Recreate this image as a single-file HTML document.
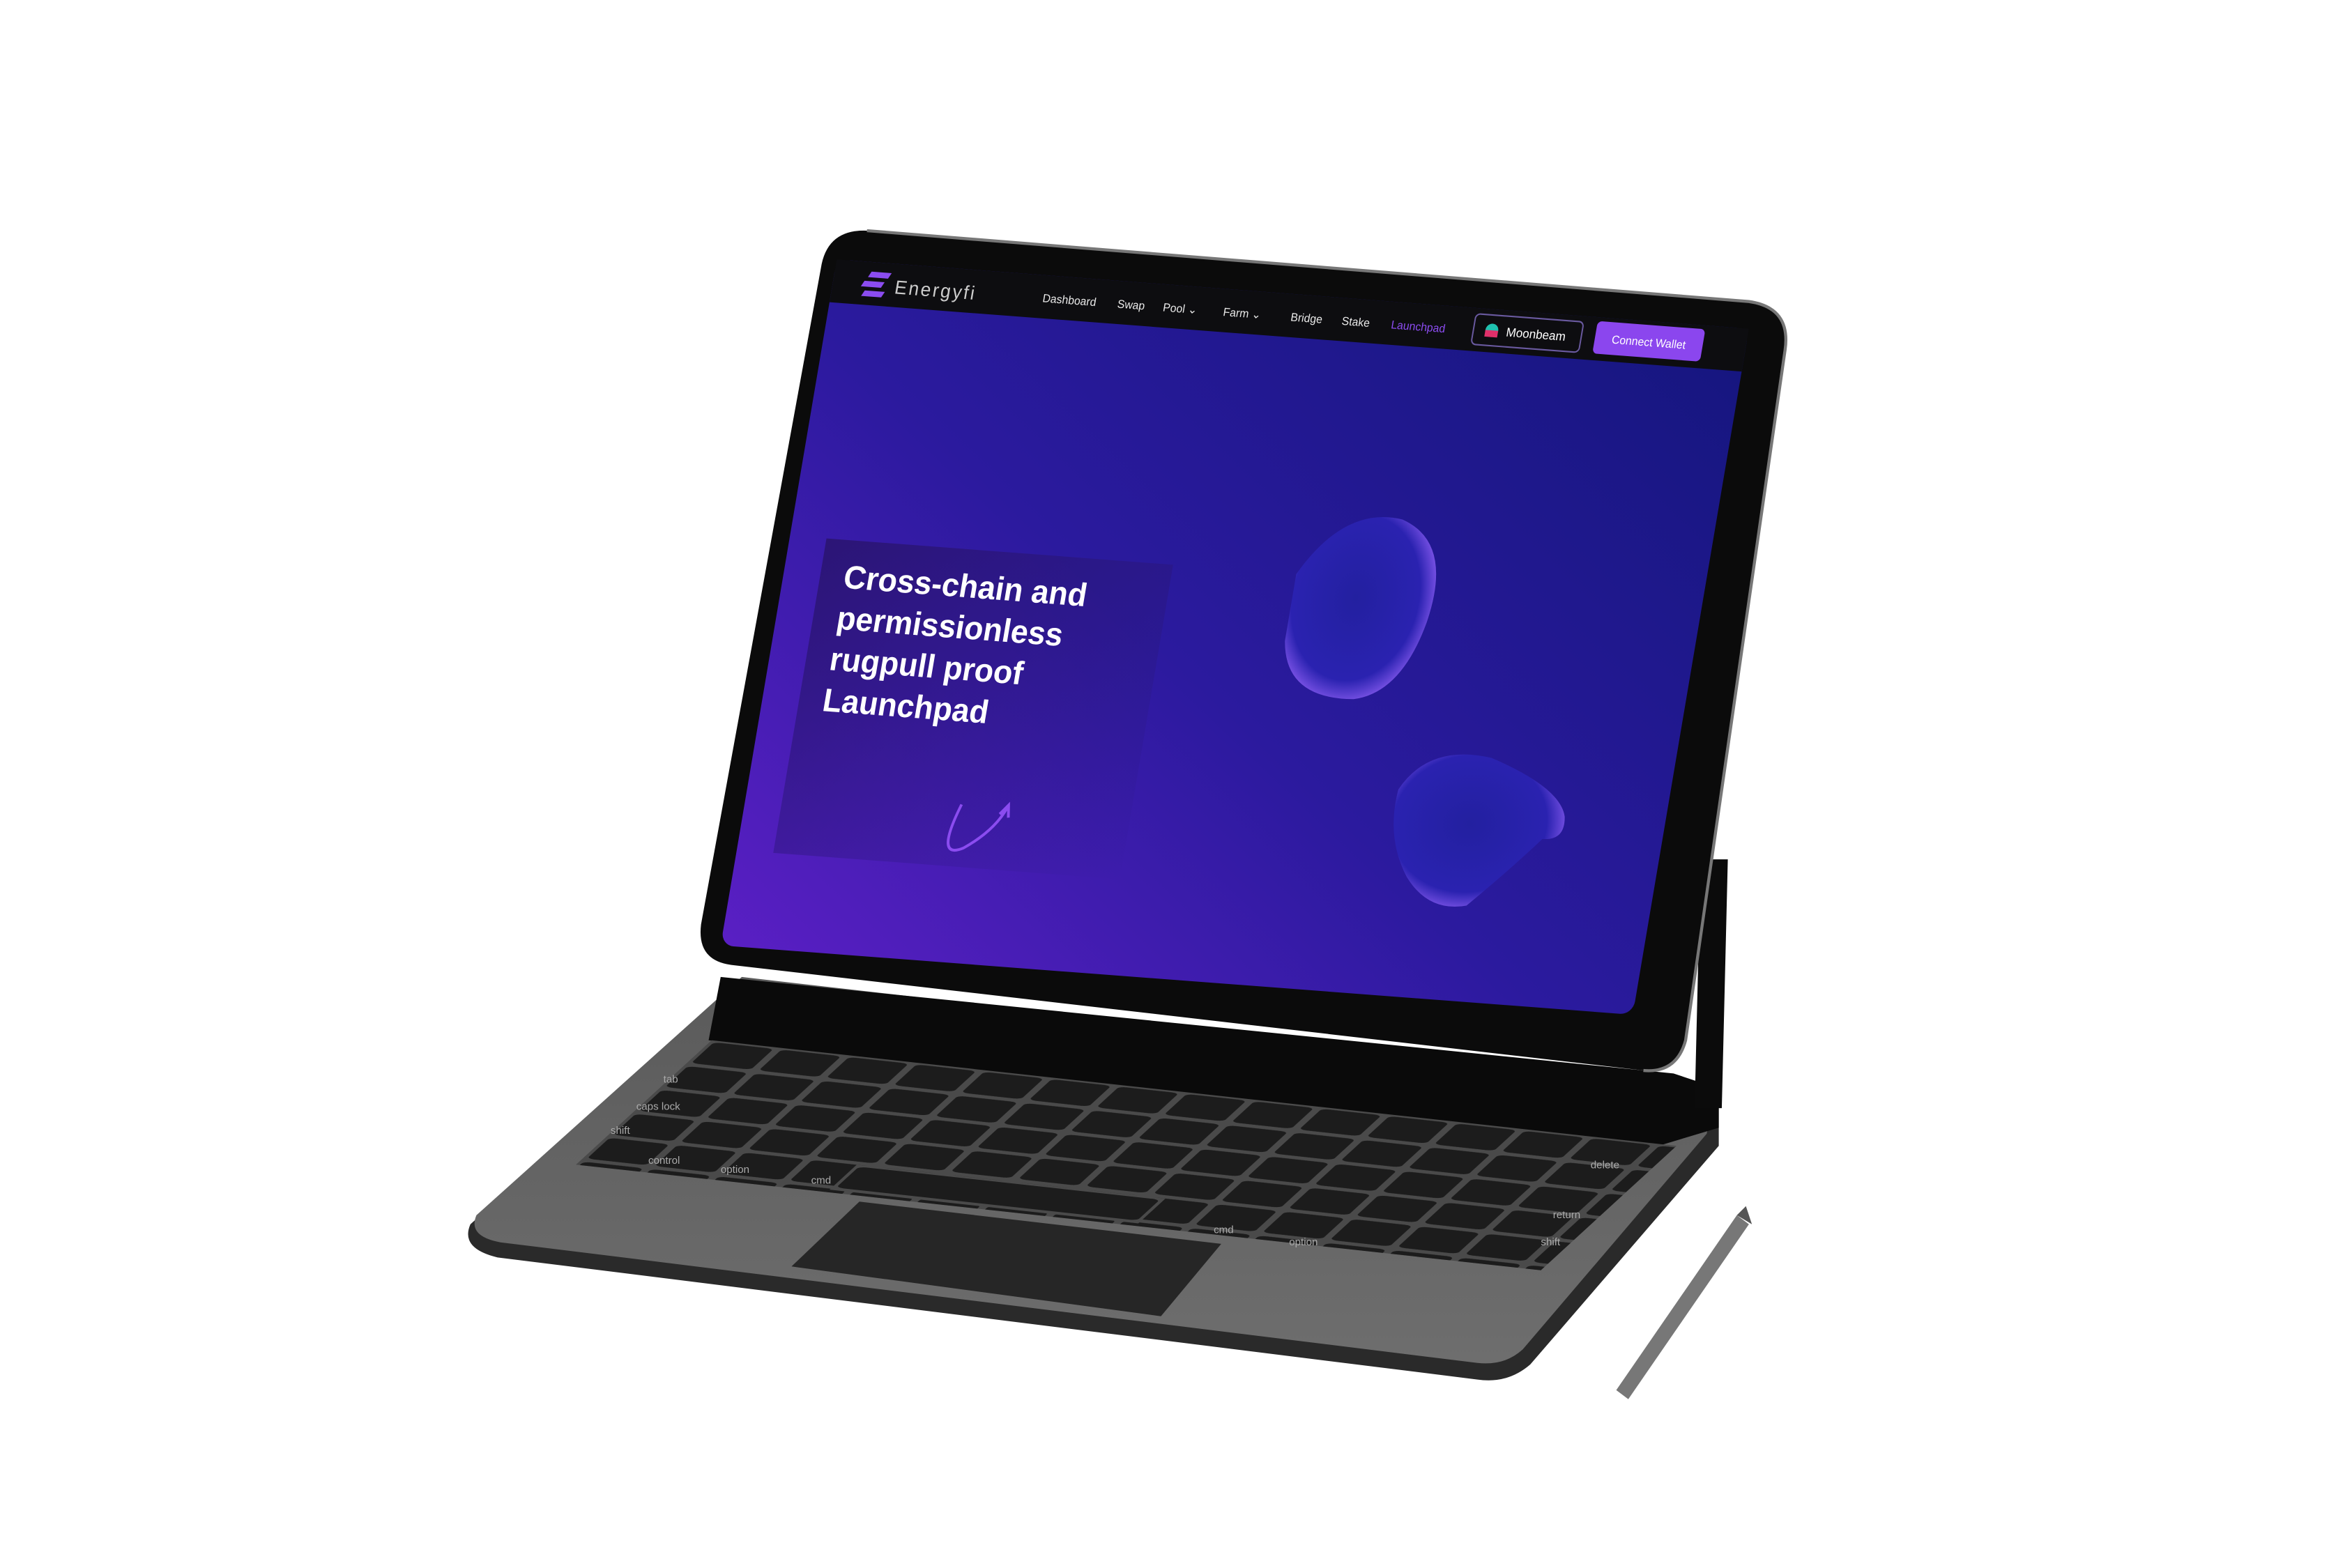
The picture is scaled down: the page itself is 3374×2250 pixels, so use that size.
<!DOCTYPE html>
<html><head><meta charset="utf-8"><style>
html,body{margin:0;padding:0;background:#fff;width:3374px;height:2250px;overflow:hidden}
svg{display:block}
text{font-family:"Liberation Sans",sans-serif}
</style></head><body>
<svg width="3374" height="2250" viewBox="0 0 1560 1040" preserveAspectRatio="none" xmlns="http://www.w3.org/2000/svg">
<defs>
<linearGradient id="scr" x1="0" y1="1" x2="1" y2="0">
<stop offset="0" stop-color="#5a1fc4"/><stop offset="0.45" stop-color="#2b1a9e"/><stop offset="1" stop-color="#15167e"/>
</linearGradient>
<linearGradient id="base" x1="0" y1="0" x2="0" y2="1">
<stop offset="0" stop-color="#5a5a5a"/><stop offset="1" stop-color="#6e6e6e"/>
</linearGradient>
<radialGradient id="blob" cx="0.45" cy="0.45" r="0.6">
<stop offset="0" stop-color="#2320a0"/><stop offset="0.75" stop-color="#2a22b0"/><stop offset="1" stop-color="#8a5cf0"/>
</radialGradient>
<linearGradient id="card" x1="0" y1="0" x2="1" y2="1">
<stop offset="0" stop-color="#2a1470" stop-opacity="0.9"/><stop offset="1" stop-color="#2a1880" stop-opacity="0"/>
</linearGradient>
<pattern id="keys" width="70" height="96" patternUnits="userSpaceOnUse">
<rect x="4" y="6" width="62" height="84" rx="8" fill="#1c1c1c"/>
</pattern>
</defs>

<!-- keyboard base -->
<path d="M312,812 L490,652 L1140,728 L1140,760 L1015,905 Q1000,918 980,915 L330,834 Q305,828 312,812 Z" fill="#2a2a2a"/>
<path d="M316,806 L492,648 L1138,722 L1132,752 L1010,895 Q998,906 980,904 L332,824 Q310,820 316,806 Z" fill="url(#base)"/>
<!-- shadow / hinge area -->
<path d="M478,648 L1110,712 L1140,722 L1140,748 L1100,760 L470,690 Z" fill="#0a0a0a"/>
<!-- keys -->
<g transform="matrix(0.64,0.07,-0.18,0.165,472,690)">
<rect x="0" y="0" width="1000" height="500" fill="#4a4a4a"/>
<rect x="0" y="0" width="1000" height="500" fill="url(#keys)"/>
<rect x="260" y="390" width="320" height="100" fill="#4a4a4a"/>
<rect x="264" y="396" width="312" height="84" rx="8" fill="#1c1c1c"/>
</g>
<g fill="#aaa" font-size="7">
<text x="440" y="718">tab</text><text x="422" y="736">caps lock</text><text x="405" y="752">shift</text>
<text x="430" y="772">control</text><text x="478" y="778">option</text><text x="538" y="785">cmd</text>
<text x="1055" y="775">delete</text><text x="1030" y="808">return</text><text x="1022" y="826">shift</text>
<text x="805" y="818">cmd</text><text x="855" y="826">option</text>
</g>
<!-- trackpad -->
<path d="M525,840 L570,797 L810,825 L770,873 Z" fill="#262626"/>

<!-- tablet stand flap -->
<path d="M1128,570 L1146,570 L1142,735 L1124,735 Z" fill="#0b0b0b"/>
<!-- tablet -->
<path d="M575,153 L1160,200 Q1188,204 1184,232 L1118,690 Q1112,712 1090,710 L485,640 Q462,637 465,613 L545,175 Q550,152 575,153 Z" fill="#0b0b0b"/>
<path d="M575,153 L1160,200 Q1188,204 1184,232 L1118,690 Q1112,712 1090,710" fill="none" stroke="#777" stroke-width="2"/>
<!-- screen -->
<g transform="matrix(0.605,0.046,-0.107,0.632,555,172)">
<rect x="0" y="0" width="1000" height="720" rx="14" fill="url(#scr)"/>
<rect x="0" y="0" width="1000" height="45" fill="#0d0d10"/>
<g fill="#8b4cf0"><path d="M40,10 h22 l-3,6 h-22 z"/><path d="M34,20 h22 l-3,6 h-22 z"/><path d="M36,30 h22 l-3,6 h-22 z"/></g>
<text x="68" y="31" fill="#ccc" font-size="20" letter-spacing="2">Energyfi</text>
<g fill="#e8e8e8" font-size="12">
<text x="230" y="28">Dashboard</text><text x="312" y="28">Swap</text>
<text x="362" y="28">Pool ⌄</text><text x="428" y="28">Farm ⌄</text>
<text x="502" y="28">Bridge</text><text x="558" y="28">Stake</text>
<text x="612" y="28" fill="#8b4cf0">Launchpad</text>
</g>
<rect x="702" y="6" width="118" height="32" rx="5" fill="#0d0d10" stroke="#6a5aa0" stroke-width="1.5"/>
<circle cx="722" cy="22" r="7" fill="#1fc2b0"/><rect x="715" y="22" width="14" height="7" fill="#e0306a"/>
<text x="738" y="27" fill="#fff" font-size="13">Moonbeam</text>
<rect x="835" y="4" width="118" height="34" rx="5" fill="#8b46ee"/>
<text x="894" y="26" fill="#fff" font-size="12" text-anchor="middle">Connect Wallet</text>
<rect x="40" y="290" width="380" height="330" fill="url(#card)"/>
<g fill="#fff" font-size="34" font-weight="bold">
<text x="66" y="340">Cross-chain and</text>
<text x="66" y="383">permissionless</text>
<text x="66" y="426">rugpull proof</text>
<text x="66" y="469">Launchpad</text>
</g>
<path d="M235,555 Q215,615 245,600 Q275,580 285,555 M278,562 L286,552 L288,565" fill="none" stroke="#8b4cf0" stroke-width="3"/>
<path d="M555,290 Q595,215 660,225 Q720,245 705,330 Q690,405 640,415 Q565,420 555,360 Z" fill="url(#blob)"/>
<path d="M705,505 Q730,455 800,465 Q880,490 890,520 Q895,545 870,545 Q840,580 800,620 Q760,630 730,595 Q700,555 705,505 Z" fill="url(#blob)"/>
</g>
<!-- pencil -->
<path d="M1072,922 L1152,806 L1160,812 L1080,928 Z" fill="#777"/>
<path d="M1152,806 L1158,800 L1162,812 Z" fill="#555"/>
</svg>
</body></html>
